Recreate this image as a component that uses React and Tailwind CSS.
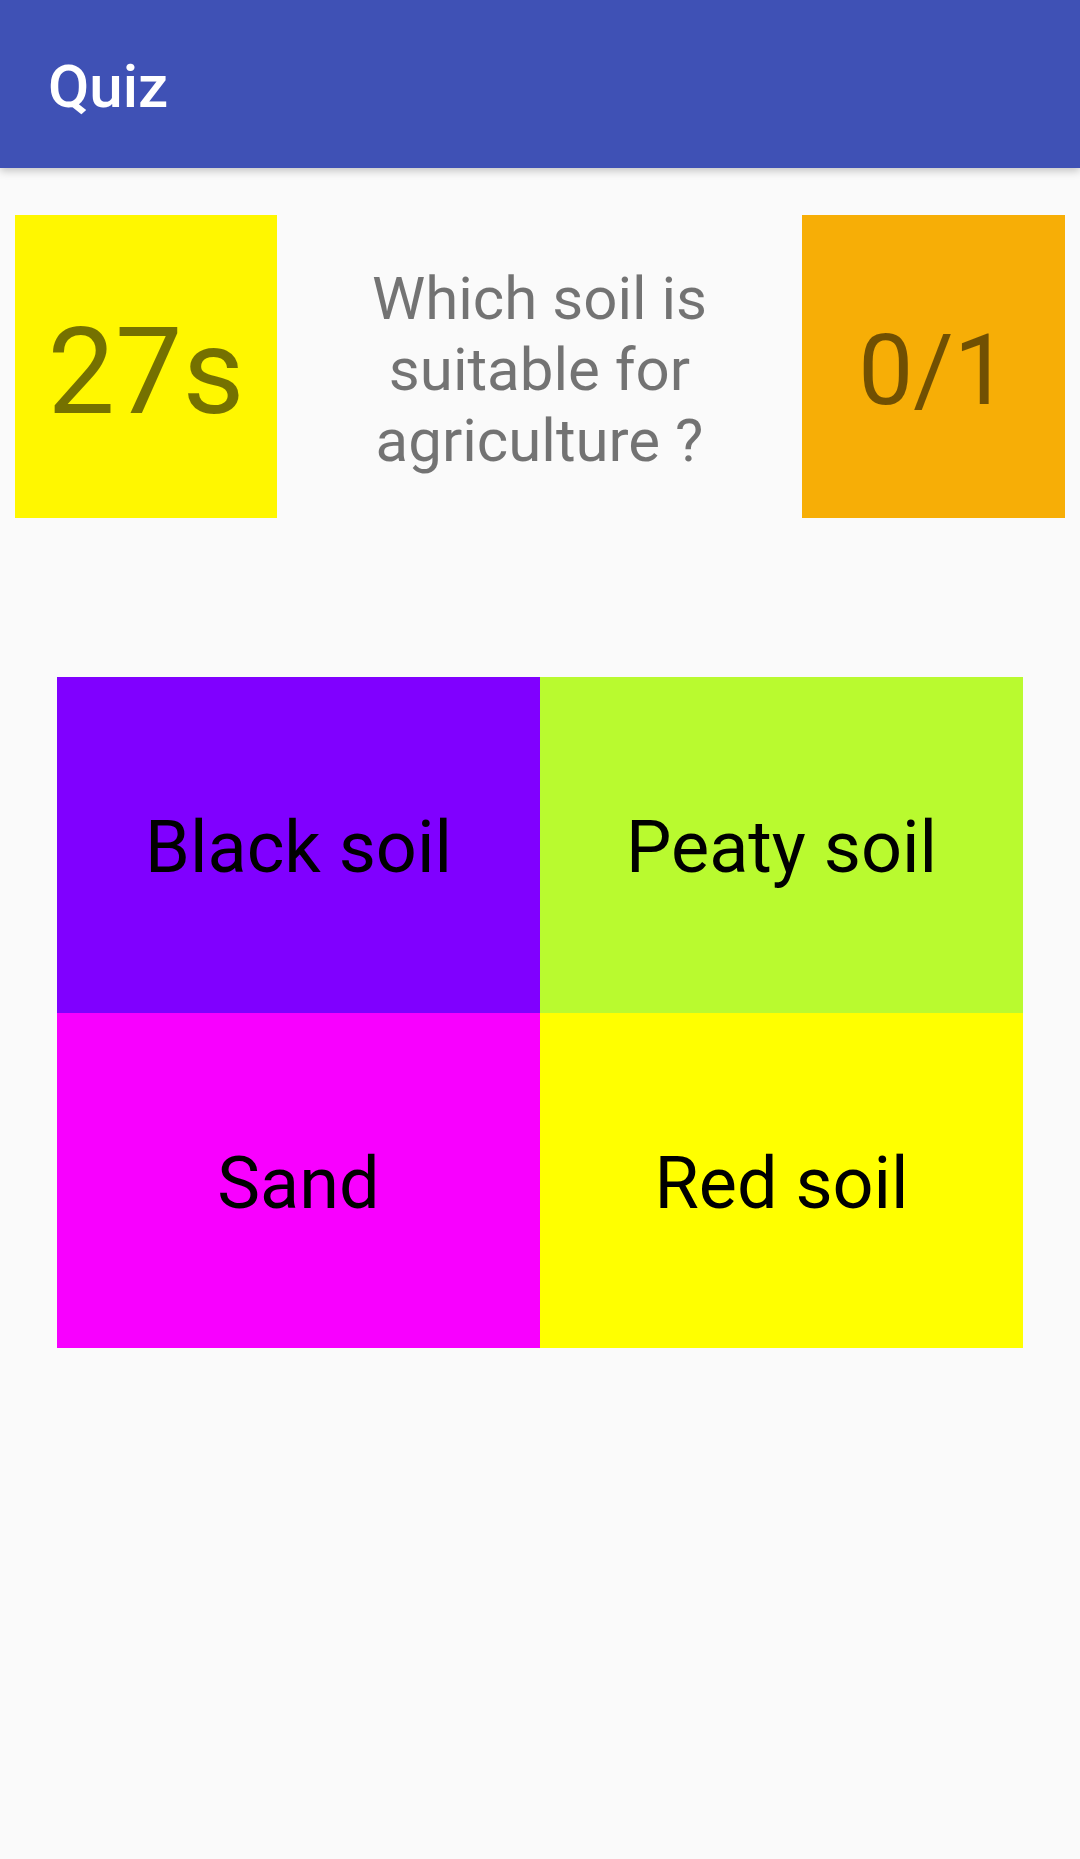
import React from 'react';

const answers = [
  { label: 'Black soil', bg: 'bg-[#8000ff]' },
  { label: 'Peaty soil', bg: 'bg-[#b9fa2f]' },
  { label: 'Sand', bg: 'bg-[#f800ff]' },
  { label: 'Red soil', bg: 'bg-[#ffff00]' },
];

export default function App() {
  return (
    <div className="min-h-screen bg-[#fafafa] font-['Roboto',sans-serif]">
      {/* toolbar */}
      <header className="relative z-10 h-[168px] bg-[#3f51b5] flex items-center pl-[48px] pt-[5px] shadow-[0_3px_8px_rgba(0,0,0,0.22)]">
        <h1 className="text-white text-[60px] font-medium leading-[70px]">Quiz</h1>
      </header>

      {/* timer / question / score */}
      <div className="flex items-stretch justify-between px-[15px] mt-[47px] h-[303px]">
        <div className="w-[262px] bg-[#fff700] flex items-center justify-center pt-[10px]">
          <span className="text-[120px] leading-none text-[#0000008a]">27s</span>
        </div>
        <div className="flex-1 flex items-center justify-center px-[40px] pt-[5px]">
          <p className="text-center text-[60px] leading-[71px] text-[#0000008a]">
            Which soil is suitable for agriculture ?
          </p>
        </div>
        <div className="w-[263px] bg-[#f7ae06] flex items-center justify-center pt-[8px]">
          <span className="text-[98px] leading-none text-[#0000008a]">0/1</span>
        </div>
      </div>

      {/* answer options */}
      <div className="mt-[159px] mx-[57px] grid grid-cols-2">
        {answers.map((a) => (
          <button
            key={a.label}
            className={`${a.bg} h-[335.5px] flex items-center justify-center pt-[7px] text-[72px] text-black`}
          >
            {a.label}
          </button>
        ))}
      </div>
    </div>
  );
}
